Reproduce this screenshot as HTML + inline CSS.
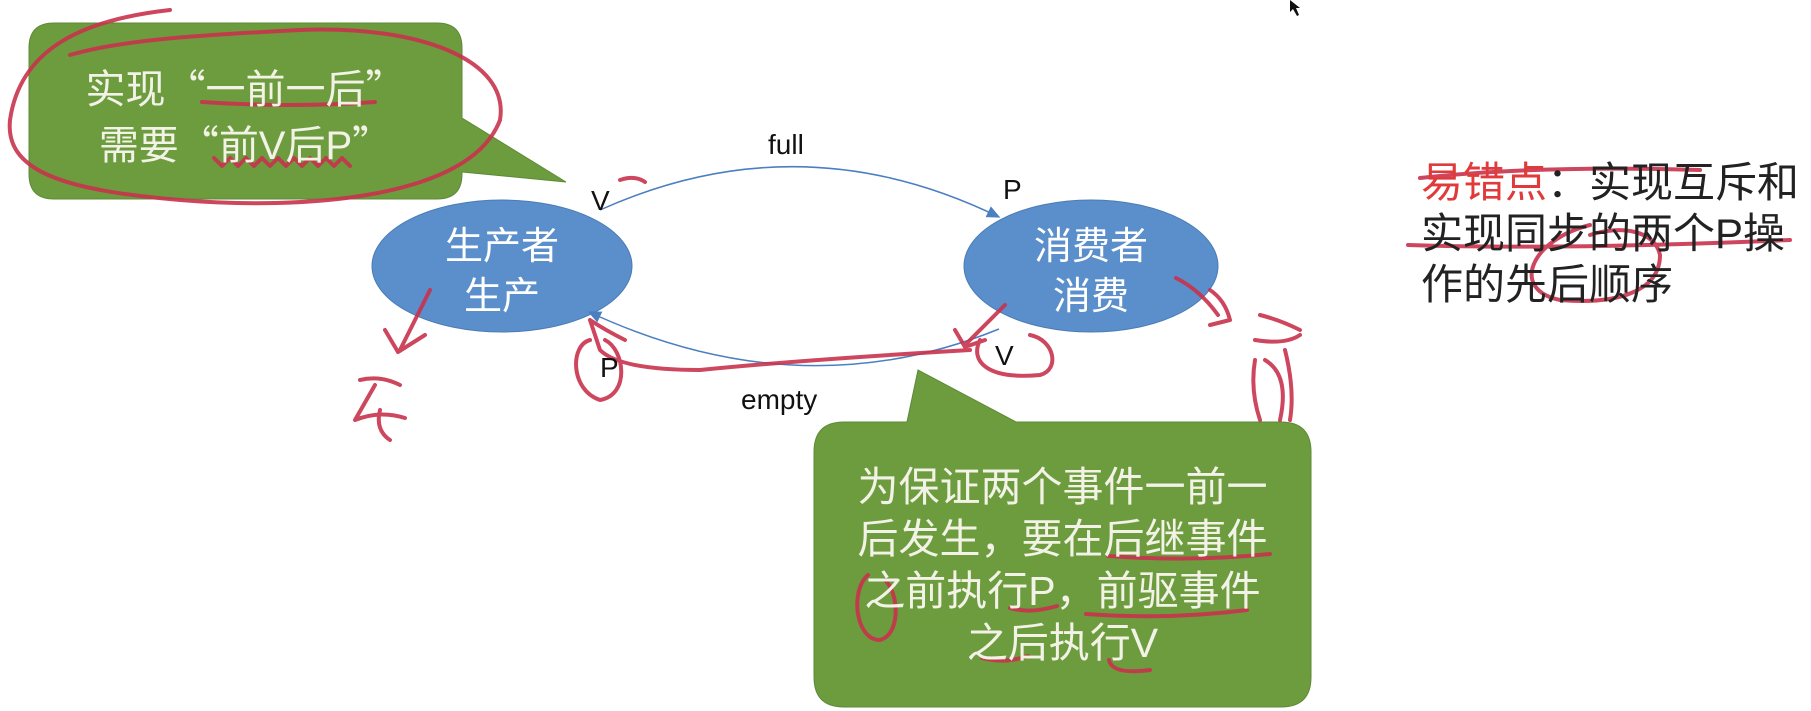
<!DOCTYPE html>
<html><head><meta charset="utf-8"><style>
html,body{margin:0;padding:0;background:#fff;}
body{width:1811px;height:711px;position:relative;overflow:hidden;font-family:"Liberation Sans","Noto Sans CJK SC",sans-serif;}
.t{position:absolute;white-space:nowrap;}
.cj{font-family:"Liberation Sans","Noto Sans CJK SC",sans-serif;}
.q{font-family:"Noto Sans CJK SC",sans-serif;}
</style></head><body>
<svg width="1811" height="711" style="position:absolute;left:0;top:0">
<defs><marker id="ar" markerWidth="10" markerHeight="10" refX="8" refY="5" orient="auto"><path d="M0,1 L9,5 L0,9 z" fill="#4a7fc0"/></marker></defs>
<path d="M54,23 H437 Q462,23 462,48 V118 L566,182 L462,172 V174 Q462,199 437,199 H54 Q29,199 29,174 V48 Q29,23 54,23 Z" fill="#6d9c3f" stroke="#5d8a36" stroke-width="1"/>
<path d="M844,422 H907 L918,370 L1016,422 H1281 Q1311,422 1311,452 V677 Q1311,707 1281,707 H844 Q814,707 814,677 V452 Q814,422 844,422 Z" fill="#6d9c3f" stroke="#5d8a36" stroke-width="1"/>
<ellipse cx="502" cy="266" rx="130" ry="66" fill="#5b8fcb" stroke="#4a7cb5"/>
<ellipse cx="1091" cy="266" rx="127" ry="66" fill="#5b8fcb" stroke="#4a7cb5"/>
<path d="M600,210 Q800,120 999,217" fill="none" stroke="#4a7fc0" stroke-width="1.5" marker-end="url(#ar)"/>
<path d="M999,329 Q800,410 589,312" fill="none" stroke="#4a7fc0" stroke-width="1.5" marker-end="url(#ar)"/>
<path d="M1290,0 L1290,12 L1293,9 L1297,16 L1299,15 L1296,8 L1300,8 Z" fill="#111"/>
<g fill="none" stroke="#c8334d" stroke-width="4" stroke-linecap="round" stroke-linejoin="round" opacity="0.9">
<path d="M170,10 C80,20 20,50 10,120 C5,170 60,190 180,200 C300,210 470,200 500,120 C510,60 420,25 300,30 C200,35 120,40 70,55"/>
<path d="M202,102 Q290,108 375,102"/>
<path d="M214,158 l8,8 l8,-8 l8,8 l8,-8 l8,8 l8,-8 l8,8 l8,-8 l8,8 l8,-8 l8,8 l8,-8 l8,8 l8,-8 l8,8 l8,-8 l8,8"/>
<path d="M620,180 Q635,175 645,182"/>
<path d="M430,290 L400,350 M385,330 L398,352 L425,335"/>
<path d="M360,380 Q380,375 400,385 M375,385 L355,420 Q380,410 405,418 M380,410 Q375,430 390,440"/>
<path d="M1176,278 Q1200,290 1218,315 M1210,290 Q1225,300 1230,320 L1210,325"/>
<path d="M1260,315 Q1280,320 1300,330 M1255,340 Q1285,345 1300,335"/>
<path d="M1255,360 Q1250,390 1260,420 M1265,360 Q1290,375 1280,420 M1285,350 Q1295,390 1290,420"/>
<path d="M1005,305 Q980,330 965,345 M955,330 L965,347 L985,340"/>
<path d="M970,350 Q800,360 700,370 Q620,370 600,350 L590,320 M590,320 Q605,330 625,340"/>
<path d="M590,340 C570,345 570,390 600,400 C630,395 625,350 605,340"/>
<path d="M980,340 C970,360 985,380 1040,375 C1060,370 1055,340 1030,335"/>
<path d="M1420,178 Q1540,165 1700,170"/>
<path d="M1408,245 Q1560,250 1790,240"/>
<path d="M1590,225 C1530,240 1510,290 1560,300 C1620,305 1660,290 1660,255 C1655,230 1620,225 1590,235"/>
<path d="M1108,556 Q1190,562 1270,554"/>
<path d="M868,575 C850,590 855,640 880,640 C900,635 900,595 885,580"/>
<path d="M1010,608 Q1030,614 1057,606"/>
<path d="M1086,614 Q1170,620 1247,610"/>
<path d="M982,658 Q1005,664 1028,656"/>
<path d="M1109,660 Q1112,675 1150,670"/>
</g>
</svg>
<div class="t cj" style="left:29px;top:60px;width:433px;text-align:center;font-size:40px;line-height:52px;color:#f2f2e6">实现<span class="q">“</span>一前一后<span class="q">”</span><br>需要<span class="q">“</span>前V后P<span class="q">”</span></div>
<div class="t cj" style="left:372px;top:222px;width:260px;text-align:center;font-size:38px;line-height:50px;color:#fff">生产者<br>生产</div>
<div class="t cj" style="left:963px;top:222px;width:256px;text-align:center;font-size:38px;line-height:50px;color:#fff">消费者<br>消费</div>
<div class="t" style="left:768px;top:129px;font-size:28px;color:#111">full</div>
<div class="t" style="left:591px;top:185px;font-size:28px;color:#111">V</div>
<div class="t" style="left:1003px;top:174px;font-size:28px;color:#111">P</div>
<div class="t" style="left:741px;top:384px;font-size:28px;color:#111">empty</div>
<div class="t" style="left:995px;top:340px;font-size:28px;color:#111">V</div>
<div class="t" style="left:600px;top:352px;font-size:28px;color:#111">P</div>
<div class="t cj" style="left:814px;top:461px;width:497px;text-align:center;font-size:41px;line-height:52px;color:#f2f2e6">为保证两个事件一前一<br>后发生，要在后继事件<br>之前执行P，前驱事件<br>之后执行V</div>
<div class="t cj" style="left:1421px;top:157px;font-size:42px;line-height:51px;color:#222"><span style="color:#e03a3a">易错点</span>：实现互斥和<br>实现同步的两个P操<br>作的先后顺序</div>
</body></html>
